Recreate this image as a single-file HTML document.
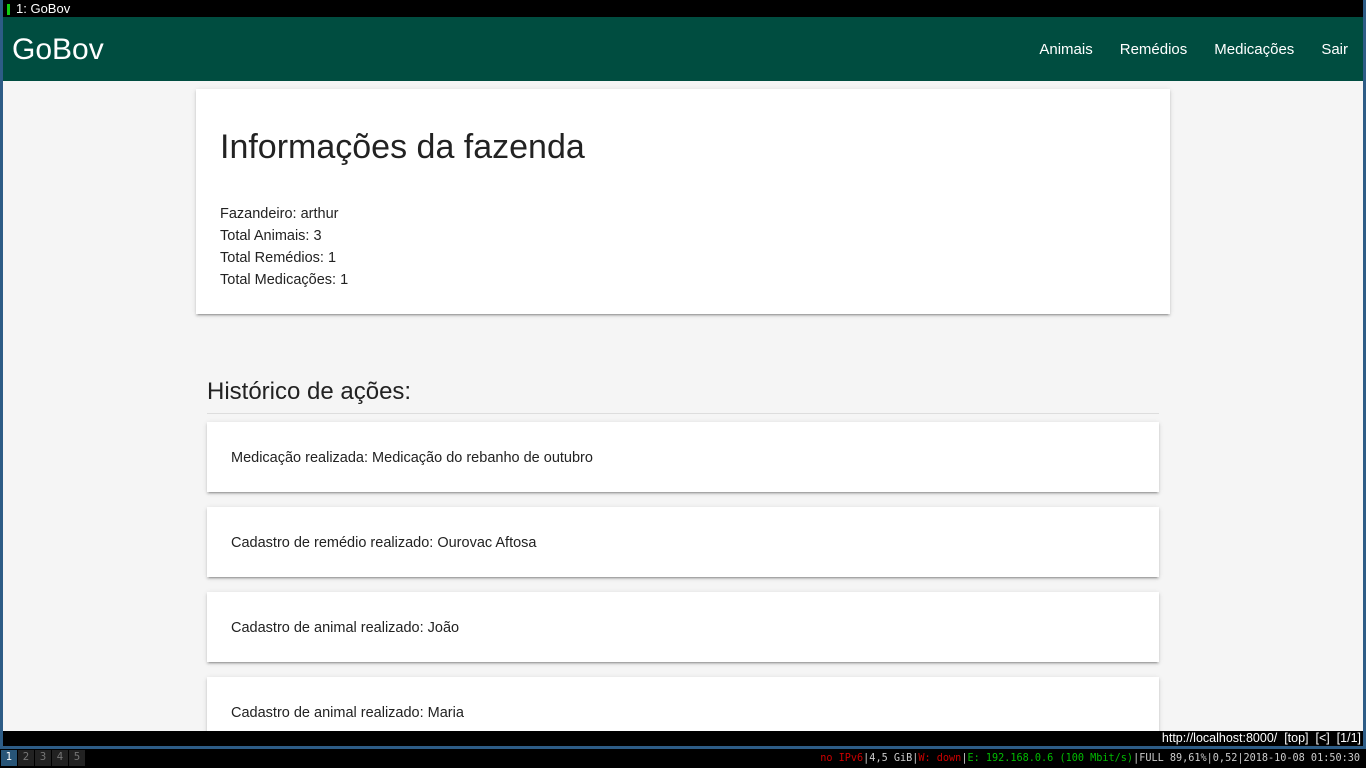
<!DOCTYPE html>
<html><head><meta charset="utf-8"><style>
*{margin:0;padding:0;box-sizing:border-box}
body{width:1366px;height:768px;overflow:hidden;background:#000;font-family:"Liberation Sans",sans-serif;position:relative}
.frame{position:absolute;left:0;top:0;width:1366px;height:749px;background:#2d5c86}
.title{position:absolute;left:3px;top:0;width:1360px;height:17px;background:#000;color:#fff;font-size:13px;line-height:17px;padding-left:13px}
.title i{position:absolute;left:4px;top:4px;width:3px;height:11px;background:#1c1}
.nav{position:absolute;left:3px;top:17px;width:1360px;height:64px;background:#004d40;color:#fff}
.nav .brand{position:absolute;left:9px;top:16px;font-size:30px}
.nav .links{position:absolute;right:15px;top:24px;font-size:15px}
.nav .links span{margin-left:27px}
.main{position:absolute;left:3px;top:81px;width:1360px;height:650px;background:#f5f5f5;overflow:hidden}
.card{position:absolute;background:#fff;box-shadow:0 2px 2px rgba(0,0,0,.14),0 1px 5px rgba(0,0,0,.12),0 3px 1px -2px rgba(0,0,0,.2);color:#222}
.c1{left:193px;top:8px;width:974px;height:225px}
.c1 h1{position:absolute;left:24px;top:39px;font-weight:normal;font-size:34px}
.c1 p{position:absolute;left:24px;top:114px;font-size:14.5px;line-height:22px}
h2{position:absolute;left:204px;top:297px;font-weight:normal;font-size:24px;color:#222}
.hr{position:absolute;left:204px;top:332px;width:952px;height:1px;background:#ddd}
.it{left:204px;width:952px;height:70px;font-size:14.5px;padding:28px 24px;line-height:16px}
.status{position:absolute;left:3px;top:731px;width:1360px;height:15px;background:#000;color:#fff;font-size:12.5px;text-align:right;line-height:15px;padding-right:2px}
.bar{position:absolute;left:0;top:749px;width:1366px;height:19px;background:#000;font-family:"DejaVu Sans Mono",monospace;font-size:10.2px;line-height:19px}
.ws{position:absolute;top:1px;width:16px;height:16px;background:#222;color:#777;text-align:center;line-height:16px;font-family:"DejaVu Sans",sans-serif}
.r{position:absolute;right:6px;top:0;color:#ccc;white-space:pre}
</style></head><body>
<div class="frame"></div>
<div class="title"><i></i>1: GoBov</div>
<div class="nav"><div class="brand">GoBov</div><div class="links"><span>Animais</span><span>Remédios</span><span>Medicações</span><span>Sair</span></div></div>
<div class="main">
<div class="card c1"><h1>Informações da fazenda</h1><p>Fazandeiro: arthur<br>Total Animais: 3<br>Total Remédios: 1<br>Total Medicações: 1</p></div>
<h2>Histórico de ações:</h2><div class="hr"></div>
<div class="card it" style="top:341px">Medicação realizada: Medicação do rebanho de outubro</div>
<div class="card it" style="top:426px">Cadastro de remédio realizado: Ourovac Aftosa</div>
<div class="card it" style="top:511px">Cadastro de animal realizado: João</div>
<div class="card it" style="top:596px">Cadastro de animal realizado: Maria</div>
</div>
<div class="status">http://localhost:8000/ &nbsp;[top] &nbsp;[&lt;] &nbsp;[1/1]</div>
<div class="bar">
<div class="ws" style="left:1px;background:#285577;color:#fff">1</div>
<div class="ws" style="left:18px">2</div>
<div class="ws" style="left:35px">3</div>
<div class="ws" style="left:52px">4</div>
<div class="ws" style="left:69px">5</div>
<div class="r"><span style="color:#c00">no IPv6</span>|4,5 GiB|<span style="color:#c00">W: down</span>|<span style="color:#0b0">E: 192.168.0.6 (100 Mbit/s)</span>|FULL 89,61%|0,52|2018-10-08 01:50:30</div>
</div>
</body></html>
